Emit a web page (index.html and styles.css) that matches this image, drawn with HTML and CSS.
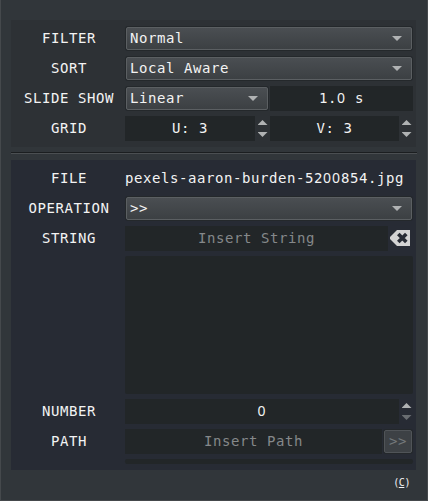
FILE: index.html
```html
<!DOCTYPE html>
<html lang="en">
<head>
<meta charset="utf-8">
<title>Slide settings</title>
<link rel="stylesheet" href="styles.css">
</head>
<body>
<main class="window">
  <section class="panel view">
    <div class="row"><label>FILTER</label><div class="combo"><span>Normal</span><i class="down"></i></div></div>
    <div class="row"><label>SORT</label><div class="combo"><span>Local Aware</span><i class="down"></i></div></div>
    <div class="row"><label>SLIDE SHOW</label><div class="combo half"><span>Linear</span><i class="down"></i></div><div class="field">1.<b>0</b> s</div></div>
    <div class="row"><label>GRID</label><div class="field u">U: 3</div><div class="spin"><i class="up"></i><i class="down"></i></div><div class="field v">V: 3</div><div class="spin last"><i class="up"></i><i class="down"></i></div></div>
  </section>
  <div class="separator"></div>
  <section class="panel file">
    <div class="row"><label>FILE</label><div class="name">pexels-aaron-burden-52<b>00</b>854.jpg</div></div>
    <div class="row"><label>OPERATION</label><div class="combo"><span>&gt;&gt;</span><i class="down"></i></div></div>
    <div class="row"><label>STRING</label><div class="field hint">Insert String</div>
      <svg class="clear" width="20" height="16" viewBox="0 0 20 16"><path fill="#d3d3d3" d="M7 0h13v16H7L5 14 0 9V7l5-5z"/><path stroke="#272b34" stroke-width="3.6" d="M8.3 4l8 8M16.3 4l-8 8"/></svg>
    </div>
    <div class="row tall"><label></label><div class="field"></div></div>
    <div class="row"><label>NUMBER</label><div class="field"><b>0</b></div><div class="spin last"><i class="up"></i><i class="down dim"></i></div></div>
    <div class="row"><label>PATH</label><div class="field hint">Insert Path</div><div class="browse">&gt;&gt;</div></div>
    <div class="row peek"><label></label><div class="field"></div></div>
  </section>
  <footer>(<u>C</u>)</footer>
</main>
</body>
</html>
```
FILE: styles.css
```css
* { box-sizing: border-box; }
body { margin: 0; background: #31363a; }
.window {
  height: 501px;
  padding: 20px 11px 0 10px;
  border: solid #45494c;
  border-width: 0 1px 1px;
  font: 14px/25px "DejaVu Sans Mono", monospace;
  letter-spacing: 0.57px;
  color: #f3f3f3;
}
.panel {
  display: flex;
  flex-direction: column;
  gap: 5px;
  padding: 6px 3px 0 2px;
}
.view { height: 127px; background: #2d3135; }
.file { height: 310px; background: #272b34; }
.separator {
  height: 2px;
  margin: 5px -1px 6px 0;
  border-top: 1px solid #1b1e20;
  border-bottom: 1px solid #4b4f52;
}
.row { display: flex; height: 25px; flex: none; }
.row.tall { height: 138px; }
.row.peek { height: 5px; }
label { width: 112px; flex: none; text-align: center; white-space: nowrap; }
.name { white-space: nowrap; }
b {
  font-family: "Noto Sans", sans-serif;
  font-weight: normal;
  line-height: 1;
  letter-spacing: 1px;
}
.combo, .browse {
  height: 23px;
  margin: 1px;
  line-height: 21px;
  border: 1px solid #5b5f62;
  border-radius: 2px;
  background: linear-gradient(#4a4e52, #3c4043);
  box-shadow: 0 0 0 1px #24282b;
}
.combo {
  flex: 1;
  display: flex;
  align-items: center;
  justify-content: space-between;
  padding: 0 9px 0 3px;
}
.half { flex: none; width: 142px; margin-right: 2px; }
.field { flex: 1; background: #222628; text-align: center; }
.tall .field { border-radius: 2px; }
.peek .field { border-radius: 3px 3px 4px 4px; }
.u { flex: none; width: 130px; }
.hint { color: #85888a; }
.up, .down {
  width: 10px;
  height: 5px;
  background: #b0b2b3;
  clip-path: polygon(0 0, 100% 0, 50% 100%);
}
.up { clip-path: polygon(50% 0, 100% 100%, 0 100%); }
.dim { background: #696d71; }
.spin {
  width: 15px;
  display: flex;
  flex-direction: column;
  align-items: center;
  justify-content: space-between;
  padding: 4px 0;
}
.last { width: 14px; padding-left: 1px; }
.clear { margin: 4px 3px 0 2px; }
.browse {
  width: 28px;
  margin-left: 2px;
  text-align: center;
  color: #74787b;
  border-color: #505458;
  background: #3d4145;
}
footer {
  margin: 3px 6px 0 0;
  font-size: 10px;
  line-height: 19px;
  letter-spacing: -0.4px;
  text-align: right;
}
```
